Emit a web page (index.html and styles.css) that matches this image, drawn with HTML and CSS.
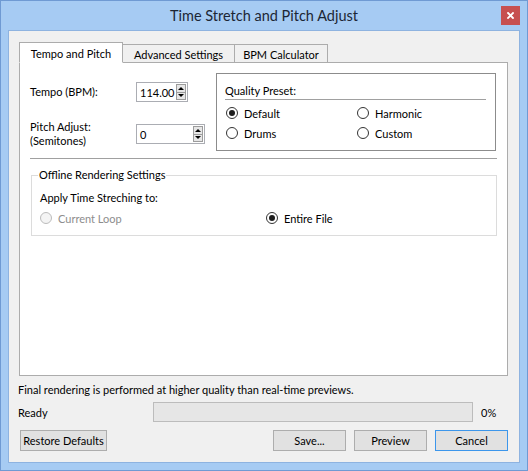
FILE: index.html
```html
<!DOCTYPE html>
<html>
<head>
<meta charset="utf-8">
<link rel="stylesheet" href="styles.css">
</head>
<body>
<div class="window">
  <div class="titlebar">
    <span></span>
    <div class="title">Time Stretch and Pitch Adjust</div>
    <div class="close"><svg width="7" height="7" viewBox="0 0 7 7"><path d="M1 1L6 6M6 1L1 6" stroke="#fff" stroke-width="1.8" stroke-linecap="square"/></svg></div>
  </div>
  <div class="client">
    <div class="tabs">
      <div class="tab active">Tempo and Pitch</div>
      <div class="tab t2">Advanced Settings</div>
      <div class="tab t3">BPM Calculator</div>
    </div>
    <div class="panel">
      <div class="top">
        <div class="fields">
          <div class="field f1">
            <label>Tempo (BPM):</label>
            <div class="spin s1"><span class="val">114.00</span><div class="arrows"><i class="up"></i><i class="down"></i></div></div>
          </div>
          <div class="field f2">
            <label>Pitch Adjust:<br>(Semitones)</label>
            <div class="spin s2"><span class="val">0</span><div class="arrows"><i class="up"></i><i class="down"></i></div></div>
          </div>
        </div>
        <div class="quality">
          <div class="qhead">Quality Preset:</div>
          <div class="qgrid">
            <div class="opt"><span class="radio on"></span>Default</div>
            <div class="opt"><span class="radio"></span>Harmonic</div>
            <div class="opt"><span class="radio"></span>Drums</div>
            <div class="opt"><span class="radio"></span>Custom</div>
          </div>
        </div>
      </div>
      <div class="sep"></div>
      <fieldset class="group">
        <legend>Offline Rendering Settings</legend>
        <div class="apply">Apply Time Streching to:</div>
        <div class="grow">
          <div class="opt disabled"><span class="radio"></span>Current Loop</div>
          <div class="opt"><span class="radio on"></span>Entire File</div>
        </div>
      </fieldset>
    </div>
    <div class="note">Final rendering is performed at higher quality than real-time previews.</div>
    <div class="status">
      <span class="ready">Ready</span>
      <div class="progress"></div>
      <span class="pct">0%</span>
    </div>
    <div class="buttons">
      <button class="btn restore">Restore Defaults</button>
      <span class="spacer"></span>
      <button class="btn">Save...</button>
      <button class="btn">Preview</button>
      <button class="btn default">Cancel</button>
    </div>
  </div>
</div>
</body>
</html>
```
FILE: styles.css
```css
body {
  margin: 0;
  font-family: Lato, "Open Sans", sans-serif;
  font-size: 11px;
  color: #000;
}
.window {
  width: 528px;
  height: 471px;
  box-sizing: border-box;
  border: 1px solid #6f9ad3;
  background: #a6cbf3;
  display: flex;
  flex-direction: column;
}
.titlebar {
  height: 29px;
  flex: none;
  display: grid;
  grid-template-columns: 1fr auto 1fr;
  align-items: start;
}
.title {
  font-size: 14.5px;
  line-height: 29px;
  color: #1c2635;
}
.close {
  justify-self: end;
  margin: 5px 7px 0 0;
  width: 19px;
  height: 19px;
  background: #c75050;
  display: flex;
  align-items: center;
  justify-content: center;
}
.client {
  flex: 1;
  margin: 0 7px 7px;
  border: 1px solid #8eb3e0;
  background: #f0f0f0;
  padding: 11px 11px 0 10px;
  display: flex;
  flex-direction: column;
}
.tabs {
  display: flex;
  align-items: flex-end;
  height: 21px;
  margin-bottom: -1px;
  position: relative;
  z-index: 1;
}
.tab {
  box-sizing: border-box;
  height: 19px;
  border: 1px solid #acacac;
  background: #f0f0f0;
  display: flex;
  align-items: center;
  justify-content: center;
  margin-left: -1px;
  padding-top: 1px;
}
.tab.active {
  height: 21px;
  width: 104px;
  margin-left: 0;
  background: #fff;
  border-bottom-color: #fff;
  position: relative;
  z-index: 1;
}
.t2 { width: 113px; }
.t3 { width: 94px; }
.panel {
  flex: none;
  box-sizing: border-box;
  height: 314px;
  border: 1px solid #acacac;
  background: #fff;
  padding: 10px 10px 0 10px;
}
.top {
  display: flex;
}
.fields {
  width: 186px;
  padding-top: 9px;
}
.field {
  display: flex;
  align-items: center;
}
.field label {
  width: 106px;
  line-height: 14px;
}
.f2 {
  margin-top: 18px;
}
.spin {
  box-sizing: border-box;
  height: 20px;
  border: 1px solid #abadb3;
  background: #fff;
  display: flex;
  align-items: center;
  padding-left: 3px;
  padding-right: 1px;
}
.s1 { width: 52px; }
.s2 { width: 69px; }
.val { flex: 1; }
.arrows {
  box-sizing: border-box;
  width: 10px;
  height: 16px;
  border: 1px solid #9c9c9c;
  background: #e6e6e6;
  display: flex;
  flex-direction: column;
}
.arrows i {
  flex: 1;
  display: flex;
  align-items: center;
  justify-content: center;
}
.arrows i.up {
  border-bottom: 1px solid #9c9c9c;
}
.arrows i::after {
  content: "";
  width: 0;
  height: 0;
  border-left: 3px solid transparent;
  border-right: 3px solid transparent;
}
.arrows i.up::after { border-bottom: 3px solid #000; }
.arrows i.down::after { border-top: 3px solid #000; }
.quality {
  box-sizing: border-box;
  width: 280px;
  height: 78px;
  border: 1px solid #8c8c8c;
  padding: 9px 9px 0 8px;
}
.qhead {
  line-height: 16px;
  border-bottom: 1px solid #a0a0a0;
}
.qgrid {
  display: grid;
  grid-template-columns: 131px 1fr;
  grid-auto-rows: 20px;
  margin-top: 3px;
}
.opt {
  display: flex;
  align-items: center;
}
.radio {
  box-sizing: border-box;
  width: 12px;
  height: 12px;
  border: 1px solid #333;
  border-radius: 50%;
  background: #fff;
  margin: 0 6px 0 1px;
  display: flex;
  align-items: center;
  justify-content: center;
}
.radio.on::after {
  content: "";
  width: 6px;
  height: 6px;
  border-radius: 50%;
  background: #1e1e1e;
}
.sep {
  height: 1px;
  background: #a0a0a0;
  margin-top: 7px;
}
.group {
  margin: 8px 0 0 1px;
  padding: 0 8px 7px 8px;
  border: 1px solid #dcdcdc;
  min-inline-size: auto;
}
.group legend {
  padding: 0 1px;
  margin-left: -2px;
  line-height: 16px;
}
.apply {
  margin-top: 7px;
  line-height: 16px;
}
.grow {
  display: grid;
  grid-template-columns: 226px 1fr;
  height: 20px;
  margin-top: 2px;
}
.grow .radio { margin-left: 0; }
.opt.disabled { color: #8d8d8d; }
.opt.disabled .radio {
  border-color: #bcbcbc;
  background: #f4f4f4;
}
.note {
  margin: 6px 0 0 -1px;
  line-height: 16px;
}
.status {
  display: flex;
  align-items: center;
  height: 20px;
  margin: 4px 0 0 -1px;
}
.ready { width: 135px; }
.progress {
  box-sizing: border-box;
  width: 320px;
  height: 20px;
  border: 1px solid #bcbcbc;
  background: #e6e6e6;
}
.pct { margin-left: 8px; }
.buttons {
  display: flex;
  margin-top: 8px;
}
.btn {
  box-sizing: border-box;
  height: 21px;
  width: 73px;
  border: 1px solid #adadad;
  background: #e1e1e1;
  font: inherit;
  color: #000;
  padding: 0;
  margin-left: 8px;
}
.btn.restore {
  width: 87px;
  margin-left: 1px;
}
.btn.default { border-color: #3c96eb; }
.spacer { flex: 1; }
```
